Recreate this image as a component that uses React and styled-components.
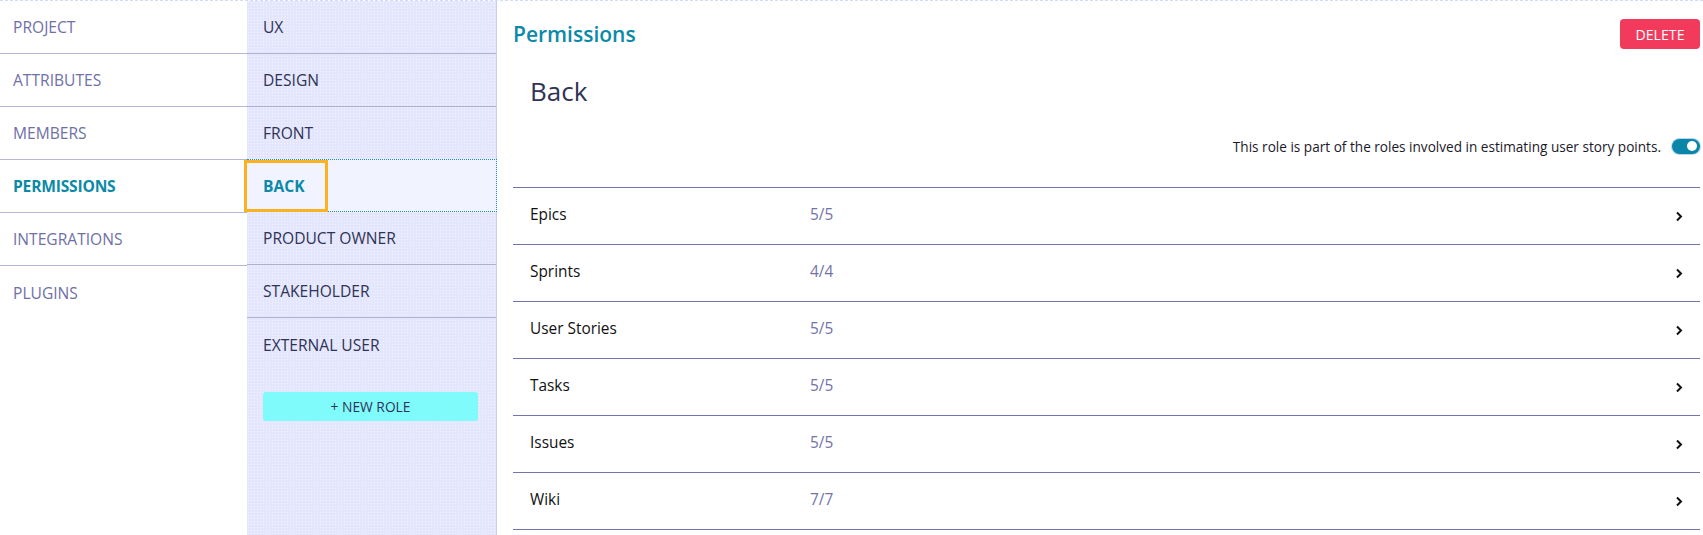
import React from "react";
import styled, { createGlobalStyle } from "styled-components";

const Global = createGlobalStyle`
  html, body { margin: 0; padding: 0; background: #fff; }
  body { font-family: "Open Sans", "Noto Sans", sans-serif; }
  * { box-sizing: border-box; }
`;

const Page = styled.div`
  display: flex;
  width: 1703px;
  height: 535px;
  overflow: hidden;
  border-top: 1px dashed #d4dafa;
`;

const Nav = styled.nav`
  width: 247px;
  flex-shrink: 0;
  display: flex;
  flex-direction: column;
`;

const NavItem = styled.div`
  height: 53px;
  display: flex;
  align-items: center;
  padding-left: 13px;
  font-size: 15.6px;
  text-transform: uppercase;
  color: ${(p) => (p.$active ? "#0a8aa8" : "#6f70a6")};
  font-weight: ${(p) => (p.$active ? 700 : 400)};
  letter-spacing: ${(p) => (p.$active ? "-0.2px" : "0")};
  border-bottom: ${(p) => (p.$last ? "none" : "1px solid #b6b6da")};
`;

const Roles = styled.div`
  width: 250px;
  flex-shrink: 0;
  background-color: #e3e6fc;
  background-image: radial-gradient(#f3f4ff 0.6px, transparent 0.8px);
  background-size: 3px 3px;
  border-right: 1px solid #c9cdf2;
  display: flex;
  flex-direction: column;
`;

const RoleItem = styled.div`
  height: 53px;
  display: flex;
  align-items: center;
  padding-left: ${(p) => (p.$selected ? "0" : "16px")};
  font-size: 15.6px;
  text-transform: uppercase;
  color: ${(p) => (p.$selected ? "#0a8aa8" : "#2f3356")};
  font-weight: ${(p) => (p.$selected ? 700 : 400)};
  background-color: ${(p) => (p.$selected ? "#f1f3ff" : "transparent")};
  border-bottom: ${(p) =>
    p.$selected ? "1px dotted #1a8fb8" : p.$last ? "none" : "1px solid #aeb0cc"};
  border-top: ${(p) => (p.$selected ? "1px dotted #1a8fb8" : "none")};
  border-right: ${(p) => (p.$selected ? "1px dotted #1a8fb8" : "none")};
  margin-top: ${(p) => (p.$selected ? "-1px" : "0")};
  margin-right: ${(p) => (p.$selected ? "-1px" : "0")};
`;

const FocusLabel = styled.span`
  display: flex;
  align-items: center;
  height: 50px;
  margin-left: -2px;
  padding: 0 22px 0 18px;
  outline: 3px solid #f9b222;
  outline-offset: -2px;
  box-shadow: inset 0 0 3px rgba(0, 0, 0, 0.15);
`;

const NewRole = styled.button`
  margin: 21px 18px 0 16px;
  height: 29px;
  border: none;
  border-radius: 3px;
  background: #80fbfc;
  color: #2f3356;
  font-family: inherit;
  font-size: 13.8px;
  text-transform: uppercase;
  cursor: pointer;
`;

const Main = styled.main`
  flex: 1;
  padding: 0 3px 0 16px;
  display: flex;
  flex-direction: column;
`;

const Header = styled.div`
  display: flex;
  align-items: center;
  justify-content: space-between;
  margin-top: 18px;
  height: 30px;
`;

const Title = styled.h1`
  margin: 0;
  font-size: 21px;
  font-weight: 600;
  color: #0a8aa8;
`;

const DeleteButton = styled.button`
  width: 80px;
  height: 30px;
  border: none;
  border-radius: 4px;
  background: #f23a5c;
  color: #fff;
  font-family: inherit;
  font-size: 14.2px;
  text-transform: uppercase;
`;

const RoleName = styled.h2`
  margin: 26px 0 0 17px;
  font-size: 26px;
  line-height: 32px;
  font-weight: 400;
  color: #2f3356;
`;

const ToggleRow = styled.div`
  margin-top: 29px;
  height: 20px;
  display: flex;
  align-items: center;
  justify-content: flex-end;
  gap: 11px;
  font-size: 13.6px;
  color: #1a1a2a;
`;

const Toggle = styled.span`
  position: relative;
  flex-shrink: 0;
  width: 28px;
  height: 15px;
  border-radius: 8px;
  background: #0a86a8;
  box-shadow: 0 0 0 1px #b9d4f4;
  &::after {
    content: "";
    position: absolute;
    right: 3px;
    top: 2.5px;
    width: 10px;
    height: 10px;
    border-radius: 50%;
    background: #fff;
  }
`;

const Table = styled.div`
  margin-top: 31px;
  border-top: 1px solid #7474aa;
`;

const Row = styled.div`
  height: 57px;
  display: flex;
  align-items: center;
  padding: 0 17px;
  border-bottom: 1px solid #7474aa;
  font-size: 15.4px;
`;

const Label = styled.span`
  width: 280px;
  color: #111;
  margin-top: -3px;
`;

const Count = styled.span`
  flex: 1;
  color: #7373a8;
  margin-top: -3px;
`;

const Chevron = () => (
  <svg width="8" height="11" viewBox="0 0 8 11">
    <polyline points="2,1.5 6,5.5 2,9.5" fill="none" stroke="#111" strokeWidth="2" />
  </svg>
);

const navItems = ["Project", "Attributes", "Members", "Permissions", "Integrations", "Plugins"];
const roles = ["UX", "Design", "Front", "Back", "Product Owner", "Stakeholder", "External User"];
const perms = [
  ["Epics", "5/5"],
  ["Sprints", "4/4"],
  ["User Stories", "5/5"],
  ["Tasks", "5/5"],
  ["Issues", "5/5"],
  ["Wiki", "7/7"],
];

export default function App() {
  return (
    <>
      <Global />
      <Page>
        <Nav>
          {navItems.map((n, i) => (
            <NavItem key={n} $active={n === "Permissions"} $last={i === navItems.length - 1}>
              {n}
            </NavItem>
          ))}
        </Nav>
        <Roles>
          {roles.map((r, i) =>
            r === "Back" ? (
              <RoleItem key={r} $selected>
                <FocusLabel>{r}</FocusLabel>
              </RoleItem>
            ) : (
              <RoleItem key={r} $last={i === roles.length - 1}>
                {r}
              </RoleItem>
            )
          )}
          <NewRole>+ New role</NewRole>
        </Roles>
        <Main>
          <Header>
            <Title>Permissions</Title>
            <DeleteButton>Delete</DeleteButton>
          </Header>
          <RoleName>Back</RoleName>
          <ToggleRow>
            This role is part of the roles involved in estimating user story points.
            <Toggle />
          </ToggleRow>
          <Table>
            {perms.map(([l, c]) => (
              <Row key={l}>
                <Label>{l}</Label>
                <Count>{c}</Count>
                <Chevron />
              </Row>
            ))}
          </Table>
        </Main>
      </Page>
    </>
  );
}
